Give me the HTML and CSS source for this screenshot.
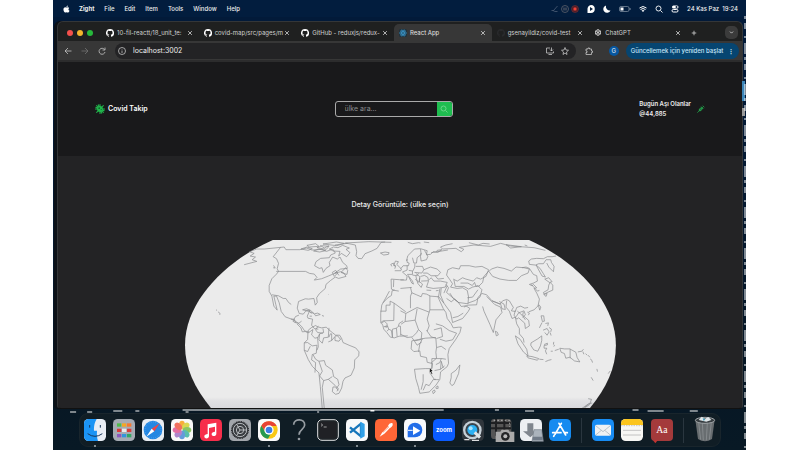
FILE: index.html
```html
<!DOCTYPE html>
<html lang="tr">
<head>
<meta charset="utf-8">
<title>Covid Takip</title>
<link rel="stylesheet" href="styles.css">
</head>
<body>
<svg class="defs" aria-hidden="true">
  <symbol id="github" viewBox="0 0 16 16"><path fill="currentColor" d="M8 0a8 8 0 0 0-2.5 15.600c.4.07.55-.17.55-.38v-1.490c-2.010.37-2.530-.49-2.690-.94-.09-.23-.48-.94-.82-1.130-.28-.15-.68-.52-.01-.53.63-.01 1.080.58 1.230.82.72 1.210 1.870.87 2.330.66.07-.52.28-.87.51-1.070-1.780-.2-3.640-.89-3.640-3.950 0-.87.31-1.590.82-2.150-.08-.2-.36-1.020.08-2.120 0 0 .67-.21 2.200.82a7.600 7.600 0 0 1 4 0c1.530-1.040 2.200-.82 2.200-.82.44 1.100.16 1.920.08 2.120.51.56.82 1.270.82 2.150 0 3.070-1.870 3.750-3.650 3.950.29.25.54.73.54 1.480v2.200c0 .21.15.46.55.38A8 8 0 0 0 8 0z"/></symbol>
  <symbol id="mag" viewBox="0 0 16 16"><g fill="none" stroke="currentColor" stroke-width="1.800"><circle cx="7" cy="7" r="5"/><path d="M11 11l4 4"/></g></symbol>
</svg>
<div class="desktop">
  <header class="menubar">
    <nav class="menus">
      <svg class="apple" viewBox="0 0 16 16"><path fill="#fff" d="M11 4c1.500 0 2.700.8 3.200 1.700-2.700 1.500-2.200 5.200.7 6.100C14 14 12.700 16 11.200 16c-1.200 0-1.600-.7-3-.7s-1.900.7-3 .7C3 16 1 12 1 9c0-3.500 2.200-5 4.200-5C6.500 4 7.500 4.700 8.200 4.700S9.800 4 11 4zM8 3.800C7.900 1.800 9.400.2 11.200 0 11.400 2 9.800 3.700 8 3.800z"/></svg>
      <b>Zight</b><span>File</span><span>Edit</span><span>Item</span><span>Tools</span><span>Window</span><span>Help</span>
    </nav>
    <div class="status">
      <svg class="dim" viewBox="0 0 16 16"><path fill="none" stroke="#52617a" stroke-width="1.500" d="M1 11h4l8-9M4 11l4 2h5"/></svg>
      <svg viewBox="0 0 16 16"><circle cx="8" cy="8" r="7" fill="none" stroke="#64666f" stroke-width="1.500"/><path stroke="#64666f" stroke-width="2" d="M6 5v6M10 5v6"/></svg>
      <svg viewBox="0 0 16 16"><circle cx="8" cy="8" r="7" fill="#4b1c25" stroke="#84343a"/><rect x="5" y="5" width="6" height="6" rx="1" fill="#ef4038"/></svg>
      <svg class="talk" viewBox="0 0 16 16"><path fill="#fff" d="M8 0a8 8 0 1 1-1 16H1V9a8 8 0 0 1 7-9z"/><path fill="#07203e" d="M6 4l6 4-6 4z"/></svg>
      <svg class="moon" viewBox="0 0 16 16"><path fill="#fff" d="M6 1a7.500 7.500 0 1 0 9 10A8 8 0 0 1 6 1z"/></svg>
      <svg class="battery" viewBox="0 0 24 12"><rect x="1" y="1" width="19" height="10" rx="3" fill="none" stroke="#8290a2" stroke-width="1.500"/><rect x="3" y="3" width="6" height="6" fill="#fff"/><path d="M22 4v4" stroke="#8290a2" stroke-width="2"/></svg>
      <svg viewBox="0 0 16 16"><g fill="none" stroke="#fff" stroke-width="2"><path d="M1 6q7-6 14 0M3 9q5-4 10 0"/></g><path fill="#fff" d="M5 11q3-2 6 0l-3 3z"/></svg>
      <svg class="seek"><use href="#mag"/></svg>
      <svg viewBox="0 0 16 16"><rect x="2" y="1" width="13" height="6" rx="3" fill="#fff"/><circle cx="11" cy="4" r="2" fill="#07203e"/><rect x="2" y="9" width="12" height="5" rx="2.500" fill="none" stroke="#fff" stroke-width="2"/></svg>
      <time>24 Kas Paz&nbsp; 19:24</time>
    </div>
  </header>

  <main class="window">
    <div class="tabbar">
      <div class="lights"><i class="red"></i><i class="yellow"></i><i class="green"></i></div>
      <div class="tabs">
        <div class="tab"><svg><use href="#github"/></svg><span>10-fil-reactt/18_unit_te:</span><button aria-label="Kapat"><svg viewBox="0 0 16 16"><path d="M3 3l10 10M13 3L3 13"/></svg></button></div>
        <div class="tab"><svg><use href="#github"/></svg><span>covid-map/src/pages/m</span><button aria-label="Kapat"><svg viewBox="0 0 16 16"><path d="M3 3l10 10M13 3L3 13"/></svg></button></div>
        <div class="tab"><svg><use href="#github"/></svg><span>GitHub - reduxjs/redux-</span><button aria-label="Kapat"><svg viewBox="0 0 16 16"><path d="M3 3l10 10M13 3L3 13"/></svg></button></div>
        <div class="tab active"><svg viewBox="0 0 16 16"><rect width="16" height="16" rx="3" fill="#20323d"/><g fill="none" stroke="#3b9bd0" stroke-width="1.300"><ellipse cx="8" cy="8" rx="7" ry="2.700"/><ellipse cx="8" cy="8" rx="7" ry="2.700" transform="rotate(60 8 8)"/><ellipse cx="8" cy="8" rx="7" ry="2.700" transform="rotate(120 8 8)"/></g><circle cx="8" cy="8" r="1.500" fill="#3b9bd0"/></svg><span>React App</span><button aria-label="Kapat"><svg viewBox="0 0 16 16"><path d="M3 3l10 10M13 3L3 13"/></svg></button></div>
        <div class="tab dark"><svg class="favicon"><use href="#github"/></svg><span>gsenayildiz/covid-test</span><button aria-label="Kapat"><svg viewBox="0 0 16 16"><path d="M3 3l10 10M13 3L3 13"/></svg></button></div>
        <div class="tab"><svg viewBox="0 0 16 16"><g fill="none" stroke="#ddd" stroke-width="1.500"><path d="M8 1l5 3v6l-5 3-5-3V4zM3 4l5 3v6M13 4L8 7M3 10l5-3 5 3M8 1v6"/></g></svg><span>ChatGPT</span><button aria-label="Kapat"><svg viewBox="0 0 16 16"><path d="M3 3l10 10M13 3L3 13"/></svg></button></div>
      </div>
      <button class="plus" aria-label="Yeni sekme"><svg viewBox="0 0 16 16"><path d="M8 2v12M2 8h12"/></svg></button>
      <button class="more" aria-label="Sekmeler"><svg viewBox="0 0 16 16"><path fill="none" stroke="#ddd" stroke-width="2.500" d="M3 5l5 5 5-5"/></svg></button>
    </div>
    <div class="toolbar">
      <div class="nav">
        <svg viewBox="0 0 16 16"><path d="M15 8H2M8 2L2 8l6 6"/></svg>
        <svg class="off" viewBox="0 0 16 16"><path d="M1 8h13M8 2l6 6-6 6"/></svg>
        <svg viewBox="0 0 16 16"><path d="M13 5a6 6 0 1 0 1 5M14 1v5H9"/></svg>
      </div>
      <div class="address">
        <svg viewBox="0 0 16 16"><circle cx="8" cy="8" r="7"/><path d="M8 7v5M8 4v1"/></svg>
        <input aria-label="Adres" value="localhost:3002">
        <svg viewBox="0 0 16 16"><path d="M8 2H1v10h14V9M5 15h7M11 1v7M8 5l3 3 3-3"/></svg>
        <svg viewBox="0 0 16 16"><path d="M8 1l2 5 5 .5-4 3.500 1 5-4-3-4 3 1-5-4-3.500L6 6z"/></svg>
      </div>
      <svg class="puzzle" viewBox="0 0 16 16"><path d="M2 4h4V2h3v2h4v4h2v3h-2v4H2v-4h2V8H2z"/></svg>
      <span class="profile">G</span>
      <button class="update">Güncellemek için yeniden başlat <b>⋮</b></button>
    </div>

    <div class="site">
      <header class="sitehead">
        <a class="brand" href="#"><svg viewBox="0 0 24 24"><path stroke="#20b64c" stroke-width="2.500" stroke-linecap="round" d="M12 1v22M1 12h22M4 4l16 16M20 4L4 20M8 2l8 20M2 8l20 8"/><circle cx="12" cy="12" r="7" fill="#20b64c"/><circle cx="10" cy="10" r="2" fill="#135c2b"/><circle cx="15" cy="13" r="1.300" fill="#135c2b"/></svg>Covid Takip</a>
        <form class="search"><input aria-label="ülke ara" placeholder="ülke ara..."><button type="button" aria-label="Ara"><svg><use href="#mag"/></svg></button></form>
        <div class="today"><p>Bugün Aşı Olanlar<br>@44,885</p><svg viewBox="0 0 24 24"><path fill="none" stroke="#23b650" stroke-width="2" d="M1 23l5-5M17 2l5 5M19 5l-3 3M12 5l7 7"/><path fill="#23964a" stroke="#23b650" d="M6 13l8-7 4 4-7 8H6z"/><path stroke="#132" d="M9 12l3 3M11 10l3 3"/></svg></div>
      </header>
      <section class="content">
        <h1>Detay Görüntüle: (ülke seçin)</h1>
        <svg class="map" viewBox="15 15 1290 506" role="img" aria-label="Dünya haritası">
          <defs><linearGradient id="shade" x1="0" y1="0" x2="0" y2="1"><stop offset=".93" stop-color="#ebebeb"/><stop offset=".95" stop-color="#e1e1e3"/><stop offset="1" stop-color="#d8d8dc"/></linearGradient></defs>
          <path fill="url(#shade)" d="M278 15C150 70 15 190 15 330C15 400 45 460 95 521H1225C1275 460 1305 400 1305 330C1305 190 1170 70 1045 15Z"/>
          <g class="land">
            <path d="M192 89l38-10-14-5 10-8-16-3 12-8-14-5 22-8 22 0 60-6 5 8 42 0 20-5 16 6 30-2 14 6 18-7 8 12-14 6-4 8-26 2-14 10-4 12 14 8 8-2 4 14 8-12 12-8-2-10 10-16 14 6 8-6 8 16 12 10 2 8-20 2-18 12 18-4 10 4 6 10-22 6-10-4-14 10-14 12-2 12-18 16-8 12 2 14-6 8-4-20-16 2-10-1-20 8-4 20 6 16 12 2 8-10 12-2-8 18 2 6 14 3-3 18 8 10 12 2M288 109h88l12 6 14 2 8 10-8 8 22-4 20-8 14-6 12-4 6 8M301 37l-22 28 10 6 6 14-4 16 4 8-6 8-14 14-8 20 0 18 8 14 6 30 10 12-4-16-6-26 8 0 8 20 6 26 12 16 22 8 10 6 10 8 8 8 8 12 14 4 M275 179l20 3 14 8 8 0 8 12 8 6M332 252l10 0 4 10M344 262l12 2 8-6 M344 262l-6-4 8-14 10-4M350 266l12 12 4 12"/>
            <path d="M362 42l18-6 16 5-12 5zM380 31l26-5 10 8-28 2zM410 38l16-6 20 2-8 9zM428 27l40-6 24 4-22 7zM447 42l12-6 14 2 14-7 20 8-10 4 12 10-10 12-16-10-8 8 4-14-20-1zM400 48l16-6 20 5-18 4zM420 31l12 8 14-7M464 30l20-3 18-2M495 24l30 6 4 20-2 12 6 8 11 1 10-15 20-8 16-8 12-18 12-1M495 24l70-4 68 2M600 54l14-3 12 2-2 5-14 2zM456 112l10-6 6 8-10 10zM482 112l14-14 6 8-2 12-8-2zM280 91l5 8-6-1M367 224l12-3 12 5 10 9-14-6zM402 236l10-2 8 4-14 4zM388 243h7M425 241l6 2M388 230l6 5M108 224l3 2M114 230l6 5-1 4M445 178h1"/>
            <path d="M366 290l9-1 8 4 1-8 10-8 12-6 6 4 12 3 14-2 8 8 10 8 10 8 12 0 6 10 4 12 18 8 20 8 10 12-1 12-12 12-1 24-10 22-18 8-6 10-4 20-8 16-10 3-10-8 2-14 8 0 8 10M383 293l-1 20-10 10 0 22 12 28 12 20 20 20 4 40 6 68M372 323l10-1 14 10 14-2-2 24-12 4-2 16 12 8-2 30M384 293l14-10-4 16 10 10 8-2 2 28-4 10M428 280l2 12-12 4-2 18 10 10 4-16 14-2 2-28M446 306l4-10 4 0 0 20-10 4M454 316l10-12 0 12 12 2 6-8M464 302l8 0 8 10M398 358l8 14 10 6 16-2 4 14 20 14 4 20 12 8 4 16-8 12M416 378l10 30-8 14 12 14 14-4 12-8M430 436l-4 20 6 64M444 432l20 18 10 10-4 8M372 345l10 4 8-16M414 272l-8 12 6 8 16 2M412 308l6-12"/>
            <path d="M655 168l-12-2 -10-4-1-30 26 2 12 0M643 101l3-9-6-1 5-13 9 2-5 8 14 14-2 5-18 0M634 94l-3-6 8-4 3 10M640 134l-1 22M627 168l-12 22-11 20-3 24 0 26 6 10 3 12 9 10 11 14 12 2 14-5 26-1M643 165l-8 2-2 14-12 8-13 14M600 228h17v-18h12v-12M629 198l12 6-1 52-32 1-8 6M641 204l35 26M604 263l8-5 8 8 0 10-10-2M613 274l8-2 4 10-5 6M625 282l8 4 3 20M636 306v-24l12-3 2 25M648 279l6-6 6 0 1 28M654 273l2-8 12-8"/>
          </g>
          <g class="land" transform="translate(660 0)">
            <path d="M18 78l4-16 20-20 18-1 20 6-2 12 12-1 8-8 14 2 12-8-14 2-2 4M36 68l4 16 8 0 2-16 12-10-2-16M62 54l-2 10 2 14 16-4 4-10-10-18M0 102l8-10 16 0 2-8-6-2 0-10M0 135l18 0 2-12-14-12 14-6 0-14M25 106l12 2 6-12 0-10M20 118l16 0 0-10M46 94l20 0 4 10-6 10-22-2M70 104l20-8 20 6 10 10-8 10-20 0-12-8-12 0M36 120l14 2 4-8M24 124l10 20 5 3-3-9-14-18M46 123l6 22 10 12 4-10-10-8 2-14-12-10M60 124l12-3 10 6 2 10-22 1M44 132l12 10 2-14M84 138l-6 18 20 4 24-2 12-2 6-14-20-4-20 0-8-10-6 6M104 122l8 10 18-2"/>
            <path d="M30 157l4 16 14 6 14 6 4-10 12 2 12 6 24 2 4-24M0 160l34-3M34 173l-4 10 0 36M88 182v42h42M88 224l-8 28 6 20-6 16M16 235l34-18 36 14M0 227l16 8-2 24-12 8 M14 259l30-4 6-34M44 255l10 28-6 10-12 12-16 2-20-10M54 283l10 10-2 20-20 4-8-10M34 317l20-4 20-4 32-2M34 317l-2 24 8 8 18-2 2 16 18 4 2 14 16 4-2 14M42 318l8 12 14-10M54 350l4-24 8-16M78 285l14 20 14 4 2 28-2 14 2 18-16 14M100 284l22-6 4 26-18 6M112 184l4 10 12 26 8 12 4 18 12 16 6 12 16-2 8 0-4 16-12 20-20 28-4 18 2 26-4 10-20 16-2 22-12 18-20 20-28 4-4-18-8-26-4-28 32-2 20 0 0-30 30 0 12 2M62 463l6-24 0-22M68 465l8-18 10 4 12-18 8-1M88 413l14 20 14 0M102 406l18-4 12-10M120 402l2-24 6 20M122 370l-4 12-12 6M118 312l18 6 20-4 12-20-22-8-20-14M126 272l-20-6M108 337l14-4 14 10M96 468l6-4 2 6-6 5zM106 456l6-4 1 7-6 1zM178 389l-4 26-14 32-6 4-6-8 4-16 0-12 14-10z"/>
            <path d="M122 158l-2 22 10 24 20 28 6 30 30-12 16-20 6-10-12-8-14 2-10-14-20-16-14-12 6-14-8-10M130 204l-16-20M156 248l16-4 16-10M138 190l14 10 10-8 14 12M140 152l-10 22M148 134l-10-14 4-16 14-6 20 4 4-10 26 0 18 4 20-2 20 10-8 20-16 8-12-4-10 10-22-6-10-4-16 10-12-6M148 134l8 12-6 10 20 4 16-2 14 8 4 20-2 20-28-4-16-12-10-16M160 134l4 20 26 0 14 8 12-6 16-4 12 12-6 22-14 10-22 8M180 144l22 0 14 8M216 150l6-8 4 12 12-2M232 164l-16 22-16 2M244 175l-12 12-4 22-26 1-12 6M236 152l10-10 4-18 14-16M264 108l12 16 22 8 26 4 24 0 14-14 20-8 4-12-16-4-24-2-14 12-22-8-20-4-18 6-6 6M364 98l12-2 10 4 12 18 10 4 2 16-12 6-12 4 8 4 4-4 10 10-8 2 8 14 8 18-4 20-12 12-16 6"/>
            <path d="M244 175l14 4 16 18 24 10 8-10 12-4 8 4 12 20-6 10 12 2 4-12 12-4 12 6 10-2M246 214l4 14 18 40 10 24 4-20 4-18 18-22-4-16-18-8-24-24M274 197l26 10 4 14 10 2-4-16-14-8M318 196l-2 20 10 12 8 22 10-4 4 20 8 14 0 16 12 14 2 12M344 226l-4 14 8 12 6-4 18 16 2 16 12-8-2-16-18-16 2-10M350 228l14 12 10 14M284 288l6 3 3 8-6 3zM346 245l8-12 16-6 4 12-8 8M344 302l14 10 20 30 4 20-14-12-16-24zM378 362l16 2 20 6-4 5-28-7zM416 372l12 1M434 379l10-4 8-2M391 323l20-12 12-9 0 14-4 16-8 16-12-4-9-14zM430 328l10-4 0 5-10 2 0 8 8 0-4 8 4 10M459 320l-1 7 3 3-2 4M450 348l6 0M462 346l12-4M477 339l14 2 16 0 18 10 4 16 8 13-16-3-14-11-12 3-4-14-10-4zM508 341v28M531 350l12-2 5-6M546 349l3 8M554 355l5 5M562 360l5 6M568 371l6 5M573 376l2 6M588 401l2 8M571 426l6 10M421 242l8 0 2 16-6 1zM424 262l-8 16M434 265l9-2-2 9M427 285l12-5 6 10-6 10-7-8M445 277l7 5-2 8M448 292l3 9M413 211l4 14 3-9-5-7zM380 231l6 3-3 6"/>
            <path d="M22 22l14 4 18-3 6 1M70 21l16 2M126 42l-6-6 16-6 20-4M126 42l40-2 16 10 8-7-14-6 44-7 50 4 30-9 30 8 70 5 34 8M92 53l50-8M205 23l28 7 14-5 20 2M316 29l14 10 32-4zM372 30l8 3M466 63l-12 2-14 0-12 6-20-1-16 2-8 6 2 10 18 2 10-4 14 0 8-12 14 0 2 8 8 12-2 16-14-14-6-12M406 90l12 10 10 16 6 10-10-3-10-18zM432 132l12-4 10 12-8 2zM448 142l8 8 0 15-14 6-12 6-2-5 14-8 2-14zM429 178l10-3-3 9zM392 148l18 20 6-2M628 407l-6 8M562 490l10 2-6 16-22 14M542 520l22-15 10-2M552 515l12-9M78 165l14 1M106 167l8-1"/>
          </g>
          <path d="M748 398l9 9-4 1 3 8-3 1-3-7-3 3z" fill="#111" stroke="#fff"/>
        </svg>
      </section>
    </div>
  </main>

  <svg class="sparks" viewBox="0 0 690 4" preserveAspectRatio="none" aria-hidden="true"><path stroke="#f5f5f5" d="M129 1h56M17 3h6M34 3h5M60 2h9M82 2h4M132 3h3M183 1h206M263 3h2M316 2h4M440 1h4M470 2h9M577 1h6M592 2h16M634 2h8"/></svg>
  <svg class="edge" viewBox="0 0 4 450" preserveAspectRatio="none" aria-hidden="true"><path fill="#3d86b9" d="M0 81h3v20H0z"/><path fill="#999" d="M0 108h3v8H0z"/><path stroke="#fff" stroke-width="1" stroke-dasharray="3 4 6 7 2 5 11 3" d="M3 16v434"/></svg>

  <footer class="dock">
    <svg viewBox="0 0 66 66"><rect width="66" height="66" rx="14" fill="#e8edf5"/><path fill="#1b94f5" d="M14 0h24c-8 14-8 25-8 35h9c-1 12 0 22 3 31H14A14 14 0 0 1 0 52V14A14 14 0 0 1 14 0z"/><path fill="none" stroke="#17365a" stroke-width="3" d="M17 18v8M49 18v8M11 44q22 16 44 0"/><circle class="running" cx="33" cy="81" r="3"/></svg>
    <svg viewBox="0 0 66 66"><rect width="66" height="66" rx="14" fill="#a5abb3"/><path stroke-width="10" stroke="#4fbc4b" d="M12 18h13"/><path stroke-width="10" stroke="#f5a623" d="M27 18h13"/><path stroke-width="10" stroke="#f8782d" d="M42 18h13"/><path stroke-width="10" stroke="#d93a3a" d="M12 34h13M42 34h13"/><path stroke-width="10" stroke="#e9eaec" d="M27 34h13"/><path stroke-width="10" stroke="#8a59bd" d="M12 50h13"/><path stroke-width="10" stroke="#3296dc" d="M27 50h13"/><path stroke-width="10" stroke="#35a864" d="M42 50h13"/></svg>
    <svg viewBox="0 0 66 66"><rect width="66" height="66" rx="14" fill="#e8edf2"/><circle cx="33" cy="33" r="28" fill="#2387e2"/><circle cx="33" cy="33" r="24" fill="none" stroke="#8dc6f8" stroke-dasharray="1 5" stroke-width="3"/><path fill="#f04444" d="M53 13L29 29l8 8z"/><path fill="#fff" d="M13 53l16-24 8 8z"/></svg>
    <svg viewBox="0 0 66 66"><rect width="66" height="66" rx="14" fill="#f8f8f8"/><g opacity=".85"><ellipse cx="33" cy="18" rx="9" ry="13" fill="#f7a21b"/><ellipse cx="44" cy="22" rx="9" ry="13" fill="#d5d235" transform="rotate(45 44 22)"/><ellipse cx="48" cy="33" rx="13" ry="9" fill="#78bd4b"/><ellipse cx="44" cy="44" rx="9" ry="13" fill="#3eb4a0" transform="rotate(-45 44 44)"/><ellipse cx="33" cy="48" rx="9" ry="13" fill="#4a8bd7"/><ellipse cx="22" cy="44" rx="9" ry="13" fill="#a172c4" transform="rotate(45 22 44)"/><ellipse cx="18" cy="33" rx="13" ry="9" fill="#df5795"/><ellipse cx="22" cy="22" rx="9" ry="13" fill="#ef5845" transform="rotate(-45 22 22)"/></g></svg>
    <svg viewBox="0 0 66 66"><rect width="66" height="66" rx="14" fill="#f72e4b"/><path fill="#fff" d="M23 16l26-5v33c0 10-15 9-14 1 0-5 5-6 10-7V23l-18 4v24c0 10-15 9-14 1 0-5 5-6 10-7z"/></svg>
    <svg viewBox="0 0 66 66"><rect width="66" height="66" rx="14" fill="#a2a6ab"/><circle cx="33" cy="33" r="25" fill="#3a3d41"/><g fill="none" stroke="#b6babd" stroke-width="3"><circle cx="33" cy="33" r="20"/><circle cx="33" cy="33" r="11"/><path d="M33 33h20M33 33L23 16M33 33L23 50"/></g><circle cx="33" cy="33" r="25" fill="none" stroke="#292b2e" stroke-width="4" stroke-dasharray="3 2"/></svg>
    <svg viewBox="0 0 66 66"><rect width="66" height="66" rx="14" fill="#fafafa"/><circle cx="33" cy="33" r="26" fill="#f9c815"/><path fill="#e84335" d="M10 20A26 26 0 0 1 56 21H33L22 39z"/><path fill="#269a50" d="M10 20l12 19 17 4-9 16A26 26 0 0 1 10 20z"/><circle cx="33" cy="33" r="14" fill="#fff"/><circle cx="33" cy="33" r="10" fill="#3b7de3"/><circle class="running" cx="33" cy="81" r="3"/></svg>
    <svg viewBox="0 0 66 66"><path fill="none" stroke="#979da3" stroke-width="5" d="M17 17c1-20 34-19 33 1 0 13-17 13-17 29"/><circle cx="33" cy="60" r="4" fill="#979da3"/></svg>
    <svg viewBox="0 0 66 66"><rect x="2" y="2" width="62" height="62" rx="13" fill="#20262a" stroke="#d9dbdc" stroke-width="3"/><rect x="8" y="8" width="50" height="50" rx="6" fill="#202125"/><path fill="none" stroke="#ddd" stroke-width="2" d="M12 14l5 4-5 4M20 24h9"/></svg>
    <svg viewBox="0 0 66 66"><rect width="66" height="66" rx="14" fill="#f8f9fa"/><path fill="none" stroke="#1776bb" stroke-width="7" stroke-linejoin="round" d="M12 25l33 27V14L12 41"/><path fill="#30a0e8" d="M43 8l13 7v37l-13 7z"/><circle class="running" cx="33" cy="81" r="3"/></svg>
    <svg viewBox="0 0 66 66"><rect width="66" height="66" rx="14" fill="#ff6637"/><path fill="#fff" d="M14 53l7-12 20-21 6 5-19 19zM39 20q4-10 13-8 4 8-5 14z"/><path stroke="#ff6637" stroke-width="2" d="M24 40l18-17"/></svg>
    <svg viewBox="0 0 66 66"><rect width="66" height="66" rx="14" fill="#f8f9fc"/><path fill="#226de9" d="M33 11a22 22 0 1 1 0 44H11V33a22 22 0 0 1 22-22z"/><path fill="#fff" d="M27 22l22 13-22 13z"/><path stroke="#fff" stroke-width="3" d="M12 34h14"/><circle class="running" cx="33" cy="81" r="3"/></svg>
    <svg viewBox="0 0 66 66"><rect width="66" height="66" rx="14" fill="#0b5cff"/><text x="33" y="39" text-anchor="middle" class="zoomtext">zoom</text></svg>
    <svg viewBox="0 0 66 66"><rect width="66" height="66" rx="14" fill="#30363c"/><circle cx="31" cy="33" r="28" fill="#c6d0d7"/><circle cx="31" cy="33" r="21" fill="#3b444c"/><circle cx="31" cy="33" r="15" fill="#2cb0f2"/><path d="M38 40l16 16" stroke="#dfe4e7" stroke-width="9"/><circle cx="26" cy="28" r="6" fill="#a6e4ff"/><path d="M7 62h15M30 64h21" stroke="#fff" stroke-width="3"/></svg>
    <svg viewBox="0 0 66 66"><rect width="61" height="60" rx="10" fill="#555"/><path stroke="#1f2022" stroke-width="6" d="M0 12h60M0 28h60M15 0v50M40 0v50"/><path fill="none" stroke="#ddd" stroke-width="2" stroke-dasharray="5 6" d="M8 4h48v20"/><path fill="#aaa" d="M14 38h14l4-6h20l4 6h14v31H14z"/><circle cx="43" cy="52" r="13" fill="#242527"/><circle cx="43" cy="52" r="6" fill="#bbb"/></svg>
    <svg viewBox="0 0 66 66"><rect width="66" height="66" rx="14" fill="#edeff2"/><path fill="#80868e" d="M22 13h18v24h12L31 55 9 37h13z"/><path fill="#abb3bc" stroke="#757d87" stroke-width="2" d="M42 32h23l5 35H36z"/><path fill="#717b88" d="M39 53h29v11H37z"/></svg>
    <svg viewBox="0 0 66 66"><rect width="66" height="66" rx="14" fill="#168bf0"/><path fill="none" stroke="#fff" stroke-width="5" stroke-linecap="round" d="M37 13L18 46M30 13l20 35M11 41h25M46 41h9M14 52l2-4"/></svg>
    <i class="divider"></i>
    <svg viewBox="0 0 66 66"><rect width="66" height="66" rx="14" fill="#178cf4"/><rect x="9" y="17" width="48" height="33" rx="5" fill="#eef1f3"/><path fill="none" stroke="#9faab5" stroke-width="2" d="M11 20l22 18 22-18M11 48l17-14M55 48L38 34"/></svg>
    <svg viewBox="0 0 66 66"><rect width="66" height="66" rx="14" fill="#f7f7f4"/><path fill="#fbc51d" d="M0 18v-4A14 14 0 0 1 14 0h38a14 14 0 0 1 14 14v4z"/><path stroke="#aaa" stroke-width="2" d="M6 34h54M6 48h54"/><path stroke="#888" stroke-dasharray="2 3" stroke-width="2" d="M0 20h66"/></svg>
    <svg viewBox="0 0 66 66"><rect width="66" height="66" rx="12" fill="#a43a3b"/><text x="33" y="43" text-anchor="middle" class="dicttext">Aa</text><path fill="#c23432" d="M6 64h14l-7 9z"/></svg>
    <i class="divider"></i>
    <svg viewBox="0 0 66 66"><path fill="#686d70" d="M4 2h58l-8 58q-21 14-42 0z"/><path stroke="#92979a" stroke-width="2" d="M14 10l6 52M25 12l3 52M40 12l-3 52M52 10l-6 52"/><ellipse cx="33" cy="4" rx="29" ry="9" fill="#363c40" stroke="#a0a5a8" stroke-width="3"/><path fill="#dfe5e8" d="M14 3l9-10 10 6 10-5 9 9-15 5z"/><path fill="#3f9bb8" d="M26-3l8 4-5 5z"/></svg>
  </footer>
</div>
</body>
</html>
```
FILE: styles.css
```css
* { box-sizing: border-box; }
body { margin: 0; background: #fff; color: #eee; font: 6px/10px Inter, "Liberation Sans", sans-serif; }
svg { display: block; overflow: visible; flex: none; }
button, input { font: inherit; color: inherit; border: 0; padding: 0; background: none; min-width: 0; }
.defs { position: absolute; width: 0; height: 0; }
.desktop { position: relative; display: flex; flex-direction: column; height: 100vh; min-height: 300px; margin: 0 54px 0 53px; background: linear-gradient(#021a39 0 14%, #071725 85%, #081925); }

.menubar { display: flex; justify-content: space-between; align-items: center; height: 17px; flex: none; padding: 0 8px 0 10px; background: #021d3e; }
.menus, .status { display: flex; align-items: center; gap: 10px; font-weight: 500; }
.menus b { font-weight: 700; }
.status svg { width: 8px; height: 8px; }
.status .battery { width: 12px; height: 6px; }
.status { gap: 8px; }
.status .dim, .status .dim + svg { margin-right: -6px; }
.status .seek { color: #fff; }
.apple { width: 7px; height: 8px; margin-right: -1px; }

.window { flex: 1; min-height: 0; display: flex; flex-direction: column; margin: 4px 3px 0 4px; border: 1px solid #343638; border-bottom-color: #111; border-radius: 6px 6px 4px 4px; overflow: hidden; background: #1f2020; box-shadow: -3px 0 #0c1117; }
.tabbar { display: flex; align-items: center; height: 19px; flex: none; padding: 2px 4px 0 9px; }
.lights { display: flex; gap: 4px; width: 34px; flex: none; }
.lights i { width: 6px; height: 6px; border-radius: 50%; }
.red { background: #f5504c; }
.yellow { background: #f5b52c; }
.green { background: #27b93b; }
.tabs { display: flex; flex: 1; height: 100%; max-width: 586px; min-width: 0; }
.tab { flex: 1; min-width: 0; display: flex; align-items: center; gap: 3px; padding: 0 5px; color: #d0d0d0; border-radius: 5px 5px 0 0; }
.tab svg { width: 8px; height: 8px; color: #fff; }
.tab span { flex: 1; min-width: 0; white-space: nowrap; }
.tab button svg, .plus svg { width: 6px; height: 6px; margin: 0 auto; stroke: #ddd; stroke-width: 2px; }
.tab button { width: 8px; }
.tab.active { background: #373737; color: #e4e4e4; }
.tab .favicon { color: #292a2c; }
.plus { width: 14px; }
.more { width: 13px; height: 13px; margin-left: auto; border-radius: 5px; background: #3b3b3b; display: grid; place-items: center; }
.more svg { width: 5px; height: 5px; }
.toolbar { display: flex; align-items: center; height: 21px; flex: none; gap: 9px; padding: 0 3px 0 6px; background: #373737; border-bottom: 2px solid #2c2c2d; }
.toolbar svg { width: 8px; height: 8px; fill: none; stroke: #ccc; stroke-width: 1.5px; }
.nav { display: flex; gap: 9px; width: 42px; }
.toolbar .off { stroke: #777; }
.address { flex: 1; min-width: 0; display: flex; align-items: center; gap: 7px; height: 16px; padding: 0 7px 0 3px; border-radius: 8px; background: #232325; }
.address input { flex: 1; font-size: 7px; outline: 0; }
.puzzle { margin-right: 7px; }
.profile { width: 10px; height: 10px; border-radius: 50%; background: #0757a0; text-align: center; }
.update { height: 16px; border-radius: 8px; background: #064571; color: #c9e5fa; padding: 0 5px; white-space: nowrap; margin-left: -2px; font-weight: 500; }
.update b { margin-left: 3px; }

.site { flex: 1; min-height: 0; display: flex; flex-direction: column; background: #232325; }
.sitehead { flex: none; display: flex; justify-content: space-between; align-items: center; height: 94px; padding: 0 37px; background: #19191b; }
.brand { display: flex; align-items: center; gap: 3px; color: #fff; text-decoration: none; font-size: 7px; font-weight: 600; }
.brand svg { width: 10px; height: 10px; }
.search { display: flex; width: 118px; height: 16px; border: 1px solid #aaa; border-radius: 3px; overflow: hidden; }
.search input { flex: 1; padding-left: 9px; outline: 0; font-size: 7px; }
.search input::placeholder { color: #8c8e91; opacity: 1; }
.search button { width: 15px; display: grid; place-items: center; background: #1fbd50; color: #71d78d; }
.search svg { width: 8px; height: 8px; }
.today { display: flex; align-items: center; gap: 6px; font-weight: 600; }
.today p { margin: 0; }
.today svg { width: 8px; height: 8px; }
.content { flex: 1; min-height: 0; overflow: hidden; padding-top: 44px; }
h1 { margin: 0 0 30px; text-align: center; font-size: 7px; line-height: 10px; font-weight: 500; }
.map { width: 63%; height: auto; margin: 0 auto; }
.land { fill: none; stroke: #85878a; stroke-width: 2px; stroke-linejoin: round; }

.sparks { width: 100%; height: 4px; }
.edge { position: absolute; top: 0; right: 0; width: 4px; height: 100%; }
.dock { flex: none; display: flex; align-items: center; justify-content: space-between; height: 34px; margin: 0 25px 3px 26px; padding: 0 4px; border-radius: 9px; background: #101d25; border: 1px solid #19252c; }
.dock svg { width: 22px; height: 22px; }
.running { fill: #a3abb0; }
.divider { width: 1px; height: 25px; margin: 0 3px; background: #2a363f; }
.zoomtext { fill: #fff; font: 700 18px Inter, sans-serif; }
.dicttext { fill: #fff; font: 29px "Liberation Serif", serif; }
```
